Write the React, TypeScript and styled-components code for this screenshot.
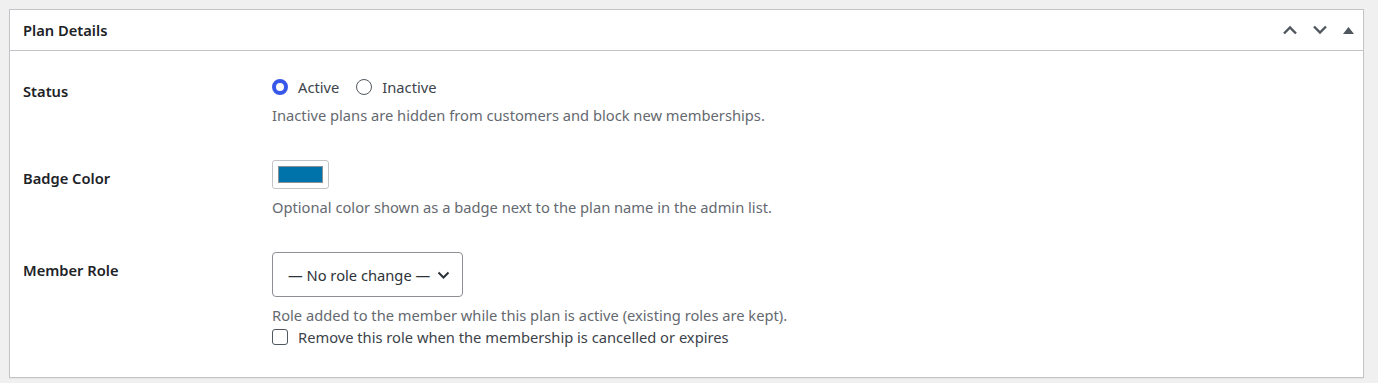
import styled, { createGlobalStyle } from "styled-components";

const GlobalStyle = createGlobalStyle`
  html, body {
    margin: 0;
    padding: 0;
    background: #f0f0f1;
    font-family: "Noto Sans", "Open Sans", sans-serif;
    color: #1d2327;
  }
`;

const Page = styled.div`
  padding: 9px 14px 5px 9px;
`;

const Postbox = styled.div`
  background: #fff;
  border: 1px solid #c3c4c7;
  box-shadow: 0 1px 1px rgba(0, 0, 0, 0.04);
`;

const Header = styled.div`
  display: flex;
  align-items: center;
  height: 40px;
  padding: 0 2px 0 13px;
  border-bottom: 1px solid #c3c4c7;
`;

const Title = styled.h2`
  flex: 1;
  margin: 0;
  font-size: 14.7px;
  font-weight: 600;
  line-height: 20px;
`;

const HandleButton = styled.span<{ $w: number }>`
  display: flex;
  align-items: center;
  justify-content: center;
  width: ${(p) => p.$w}px;
  height: 36px;
  color: #50575e;
`;

const Body = styled.div`
  padding: 26px 0 30px 13px;
  display: flex;
  flex-direction: column;
  gap: 35px;
`;

const Row = styled.div`
  display: grid;
  grid-template-columns: 249px 1fr;
`;

const Label = styled.div<{ $offset: number }>`
  padding-top: ${(p) => p.$offset}px;
  font-size: 14.7px;
  font-weight: 600;
  line-height: 20px;
`;

const Field = styled.div`
  display: flex;
  flex-direction: column;
  align-items: flex-start;
`;

const Description = styled.p<{ $gap: number }>`
  margin: ${(p) => p.$gap}px 0 0;
  font-size: 14.7px;
  line-height: 20px;
  color: #646970;
`;

const RadioGroup = styled.div`
  display: flex;
  align-items: center;
  height: 20px;
  gap: 17px;
`;

const Choice = styled.label`
  display: flex;
  align-items: center;
  gap: 10px;
  font-size: 14.7px;
  line-height: 20px;
  color: #3c434a;
`;

const Radio = styled.span<{ $checked?: boolean }>`
  box-sizing: border-box;
  width: 16px;
  height: 16px;
  border-radius: 50%;
  border: ${(p) => (p.$checked ? "4px solid #3858e9" : "1px solid #50575e")};
  background: #fff;
`;

const Swatch = styled.button`
  box-sizing: border-box;
  width: 57px;
  height: 29px;
  padding: 5px;
  border: 1px solid #c3c4c7;
  border-radius: 3px;
  background: #fff;
  display: flex;
`;

const SwatchColor = styled.span<{ $color: string }>`
  flex: 1;
  background: ${(p) => p.$color};
  border: 1px solid #8c8f94;
`;

const Select = styled.div`
  box-sizing: border-box;
  width: 191px;
  height: 45px;
  display: flex;
  align-items: center;
  justify-content: space-between;
  padding: 0 12px 0 15px;
  border: 1px solid #8c8f94;
  border-radius: 4px;
  font-size: 14.7px;
  color: #2c3338;
`;

const CheckLine = styled.label`
  margin-top: 2px;
  display: flex;
  align-items: center;
  gap: 10px;
  font-size: 14.7px;
  line-height: 20px;
  color: #3c434a;
`;

const Checkbox = styled.span`
  box-sizing: border-box;
  width: 16px;
  height: 16px;
  border: 1px solid #50575e;
  border-radius: 3px;
  background: #fff;
`;

const Chevron = ({ up }: { up?: boolean }) => (
  <svg width="16" height="10" viewBox="0 0 16 10">
    <path
      d={up ? "M2 8.5 L8 2.5 L14 8.5" : "M2 1.5 L8 7.5 L14 1.5"}
      fill="none"
      stroke="#50575e"
      strokeWidth="2.4"
    />
  </svg>
);

const App = () => (
  <Page>
    <GlobalStyle />
    <Postbox>
      <Header>
        <Title>Plan Details</Title>
        <HandleButton $w={30}>
          <Chevron up />
        </HandleButton>
        <HandleButton $w={30}>
          <Chevron />
        </HandleButton>
        <HandleButton $w={26}>
          <svg width="11" height="7" viewBox="0 0 11 7">
            <path d="M5.5 0 L11 7 L0 7 Z" fill="#50575e" />
          </svg>
        </HandleButton>
      </Header>
      <Body>
        <Row>
          <Label $offset={4}>Status</Label>
          <Field>
            <RadioGroup>
              <Choice>
                <Radio $checked />
                Active
              </Choice>
              <Choice>
                <Radio />
                Inactive
              </Choice>
            </RadioGroup>
            <Description $gap={8}>
              Inactive plans are hidden from customers and block new memberships.
            </Description>
          </Field>
        </Row>
        <Row>
          <Label $offset={8}>Badge Color</Label>
          <Field>
            <Swatch>
              <SwatchColor $color="#0073aa" />
            </Swatch>
            <Description $gap={8}>
              Optional color shown as a badge next to the plan name in the admin list.
            </Description>
          </Field>
        </Row>
        <Row>
          <Label $offset={8}>Member Role</Label>
          <Field>
            <Select>
              <span>— No role change —</span>
              <svg width="13" height="8" viewBox="0 0 13 8">
                <path d="M1.5 1.5 L6.5 6.5 L11.5 1.5" fill="none" stroke="#2c3338" strokeWidth="2" />
              </svg>
            </Select>
            <Description $gap={8}>
              Role added to the member while this plan is active (existing roles are kept).
            </Description>
            <CheckLine>
              <Checkbox />
              Remove this role when the membership is cancelled or expires
            </CheckLine>
          </Field>
        </Row>
      </Body>
    </Postbox>
  </Page>
);

export default App;
